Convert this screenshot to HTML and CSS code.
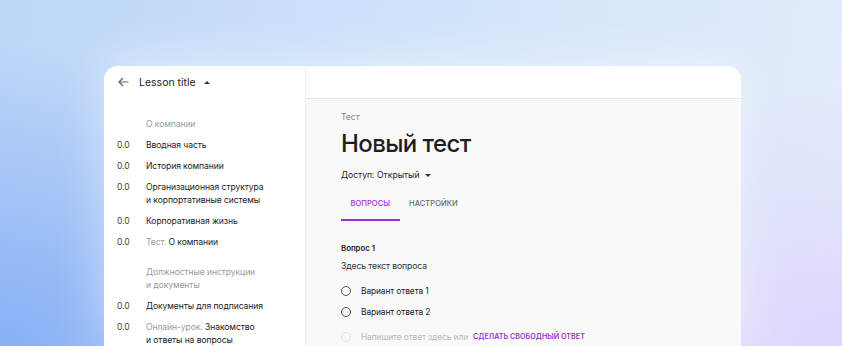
FILE: index.html
```html
<!DOCTYPE html>
<html lang="ru">
<head>
<meta charset="UTF-8" />
<meta name="viewport" content="width=device-width, initial-scale=1" />
<title>Новый тест</title>
<link rel="stylesheet" href="styles.css">
</head>
<body>

<div class="window">
  <aside class="sidebar">
    <div class="lesson-head">
      <svg class="back" width="11" height="10" viewBox="0 0 11 10">
        <path d="M10.5 5H1.2M5 1L1 5l4 4" fill="none" stroke="#666" stroke-width="1.2"/>
      </svg>
      <span class="lesson-title">Lesson title</span>
      <span class="caret-up"></span>
    </div>

    <div class="outline">
      <div class="section">О компании</div>
      <div class="row"><span class="num">0.0</span><span>Вводная часть</span></div>
      <div class="row"><span class="num">0.0</span><span>История компании</span></div>
      <div class="row"><span class="num">0.0</span><span>Организационная структура<br>и корпортативные системы</span></div>
      <div class="row"><span class="num">0.0</span><span>Корпоративная жизнь</span></div>
      <div class="row"><span class="num">0.0</span><span><span class="kind">Тест.</span> О компании</span></div>

      <div class="section spaced">Должностные инструкции<br>и документы</div>
      <div class="row"><span class="num">0.0</span><span>Документы для подписания</span></div>
      <div class="row"><span class="num">0.0</span><span><span class="kind">Онлайн-урок.</span> Знакомство<br>и ответы на вопросы</span></div>
    </div>
  </aside>

  <main class="main">
    <div class="topbar"></div>
    <div class="content">
      <div class="eyebrow">Тест</div>
      <h1 class="title">Новый тест</h1>
      <div class="access">Доступ: Открытый <span class="caret-down"></span></div>

      <div class="tabs">
        <div class="tab active">ВОПРОСЫ</div>
        <div class="tab">НАСТРОЙКИ</div>
      </div>

      <div class="question">
        <div class="q-label">Вопрос 1</div>
        <div class="q-text">Здесь текст вопроса</div>
        <div class="option"><span class="radio"></span>Вариант ответа 1</div>
        <div class="option"><span class="radio"></span>Вариант ответа 2</div>
        <div class="option add">
          <span class="radio faded"></span>
          <span class="hint">Напишите ответ здесь или</span>
          <span class="free">СДЕЛАТЬ СВОБОДНЫЙ ОТВЕТ</span>
        </div>
      </div>
    </div>
  </main>
</div>

</body>
</html>
```

FILE: styles.css
```css
html, body {
  margin: 0;
  height: 346px;
  overflow: hidden;
}

body {
  font-family: Inter, 'Noto Sans', sans-serif;
  color: #222;
  background:
    radial-gradient(ellipse 320px 260px at 100% 100%, #ddd6fc 0%, rgba(221,214,252,0) 100%),
    radial-gradient(ellipse 420px 300px at 0% 100%, #86aff5 0%, rgba(134,175,245,0) 100%),
    linear-gradient(100deg, #bcd6f8 0%, #cfe2fa 45%, #e4edfb 100%);
}

.window {
  margin: 66px 0 0 104px;
  width: 637px;
  height: 280px;
  background: #fff;
  border-radius: 14px 14px 0 0;
  display: grid;
  grid-template-columns: 201px 1fr;
  overflow: hidden;
  box-shadow: 0 -6px 50px rgba(255,255,255,0.45);
}

/* sidebar */
.sidebar {
  padding-left: 13px;
}

.lesson-head {
  height: 32px;
  display: flex;
  align-items: center;
}

.back {
  margin: 0 10px 0 1px;
}

.lesson-title {
  font-size: 10.5px;
  color: #222;
}

.caret-up {
  margin-left: 8px;
  width: 0;
  height: 0;
  border-left: 3px solid transparent;
  border-right: 3px solid transparent;
  border-bottom: 3.5px solid #333;
}

.outline {
  padding-top: 20px;
  display: flex;
  flex-direction: column;
  gap: 8px;
  font-size: 8.6px;
  line-height: 13px;
  letter-spacing: -0.1px;
}

.section {
  padding-left: 29px;
  color: #9a9a9a;
}

.section.spaced {
  margin-top: 9px;
}

.row {
  display: grid;
  grid-template-columns: 29px 1fr;
  color: #222;
}

.num {
  color: #444;
}

.kind {
  color: #9a9a9a;
}

/* main */
.main {
  background: #f9f9f9;
  border-left: 1px solid #efefef;
}

.topbar {
  height: 32px;
  background: #fff;
  border-bottom: 1px solid #e4e4e4;
}

.content {
  padding: 12px 0 0 35px;
}

.eyebrow {
  font-size: 8.5px;
  line-height: 12px;
  color: #8a8a8a;
}

.title {
  margin: 6px 0 0;
  font-size: 24px;
  line-height: 30px;
  font-weight: 500;
  letter-spacing: -0.6px;
  color: #1e1e1e;
}

.access {
  margin-top: 9px;
  font-size: 8.6px;
  line-height: 14px;
  display: flex;
  align-items: center;
  color: #222;
}

.caret-down {
  margin-left: 5px;
  width: 0;
  height: 0;
  border-left: 3px solid transparent;
  border-right: 3px solid transparent;
  border-top: 3.5px solid #333;
}

.tabs {
  margin-top: 7px;
  display: flex;
}

.tab {
  padding: 9px 9.5px;
  font-size: 7.6px;
  line-height: 12px;
  font-weight: 500;
  color: #6a6a6a;
  border-bottom: 2px solid transparent;
}

.tab.active {
  color: #9c32d8;
  border-bottom-color: #9c32d8;
}

.question {
  margin-top: 21px;
}

.q-label {
  font-size: 7.8px;
  line-height: 12px;
  font-weight: 600;
  color: #222;
}

.q-text {
  margin-top: 5px;
  font-size: 8.7px;
  line-height: 14px;
  letter-spacing: -0.15px;
  color: #333;
}

.option {
  margin-top: 7px;
  display: flex;
  align-items: center;
  font-size: 8.4px;
  line-height: 14px;
  letter-spacing: -0.1px;
  color: #222;
}

.q-text + .option {
  margin-top: 11px;
}

.option.add {
  margin-top: 11px;
}

.radio {
  width: 8px;
  height: 8px;
  border: 1.4px solid #555;
  border-radius: 50%;
  margin-right: 10px;
}

.radio.faded {
  border-color: #e2e2e2;
}

.hint {
  color: #b8b8b8;
  margin-right: 5px;
}

.free {
  font-size: 7.2px;
  font-weight: 600;
  letter-spacing: 0;
  color: #9c32d8;
}
```
